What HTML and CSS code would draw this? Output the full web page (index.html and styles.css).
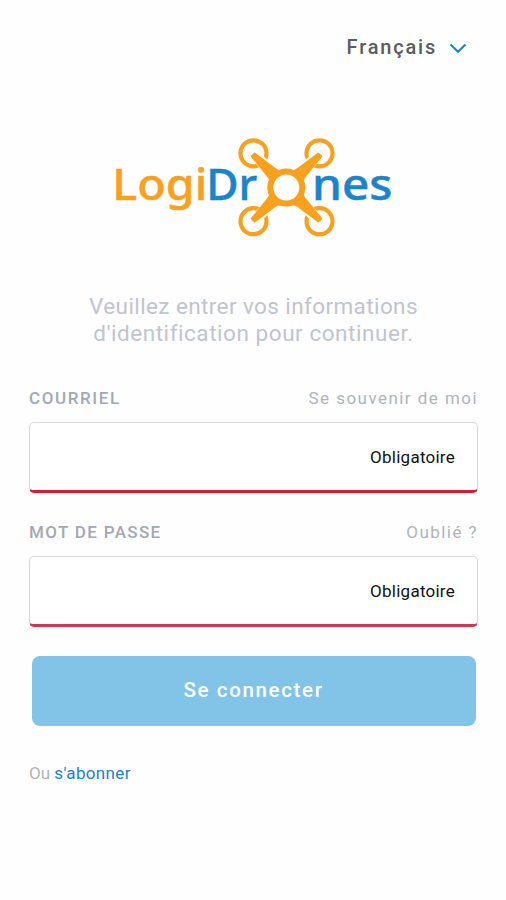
FILE: index.html
```html
<!DOCTYPE html>
<html lang="fr">
<head>
    <meta charset="UTF-8">
    <meta name="viewport" content="width=device-width, initial-scale=1.0">
    <title>LogiDrones</title>
    <link rel="stylesheet" href="styles.css">
</head>
<body>
    <header class="language">
        <span class="language-name">Français</span>
        <svg class="chevron" width="18" height="11" viewBox="0 0 18 11"><path d="M1.5 1.5L9 8.7L16.5 1.5"/></svg>
    </header>

    <svg class="logo" width="290" height="110" viewBox="110 130 290 110" role="img" aria-label="LogiDrones">
        <g class="rotors">
            <circle cx="253.5" cy="153.3" r="13"/>
            <circle cx="319.5" cy="153.3" r="13"/>
            <circle cx="253.5" cy="221.2" r="13"/>
            <circle cx="319.5" cy="221.2" r="13"/>
        </g>
        <path class="arm-gap" d="M257 157L286.5 187.5L316 157M257 218L286.5 187.5L316 218"/>
        <g class="arms">
            <path d="M251.8 156.3L254.6 153.6L274.5 168.5Q279 172 283 171L270 184Q271 179 267.5 175.5Z"/>
            <path d="M321.2 156.3L318.4 153.6L298.5 168.5Q294 172 290 171L303 184Q302 179 305.5 175.5Z"/>
            <path d="M251.8 218.7L254.6 221.4L274.5 206.5Q279 203 283 204L270 191Q271 196 267.5 199.5Z"/>
            <path d="M321.2 218.7L318.4 221.4L298.5 206.5Q294 203 290 204L303 191Q302 196 305.5 199.5Z"/>
        </g>
        <circle class="hub" cx="286.3" cy="187.5" r="16"/>
        <text class="orange" x="112.3" y="199.8" textLength="95" lengthAdjust="spacingAndGlyphs">Logi</text>
        <text class="blue" x="206.3" y="199.8" textLength="51" lengthAdjust="spacingAndGlyphs">Dr</text>
        <text class="blue" x="312" y="199.8" textLength="80.5" lengthAdjust="spacingAndGlyphs">nes</text>
    </svg>

    <p class="intro">Veuillez entrer vos informations<br><span class="intro-end">d'identification pour continuer.</span></p>

    <form class="login">
        <div class="labels">
            <label class="label" for="email">COURRIEL</label>
            <span class="hint">Se souvenir de moi</span>
        </div>
        <div class="field">
            <input id="email" type="email">
            <span class="required">Obligatoire</span>
        </div>
        <div class="labels">
            <label class="label password" for="password">MOT DE PASSE</label>
            <span class="hint">Oublié ?</span>
        </div>
        <div class="field second">
            <input id="password" type="password">
            <span class="required">Obligatoire</span>
        </div>
        <button class="submit" type="button">Se connecter</button>
    </form>

    <p class="signup">Ou <a href="#">s'abonner</a></p>
</body>
</html>
```
FILE: styles.css
```css
* {
    box-sizing: border-box;
}
body {
    margin: 0;
    padding: 0 28px 0 29px;
    height: 900px;
    background: #fefefe;
    font-family: Roboto, "Liberation Sans", sans-serif;
}
.language {
    display: flex;
    align-items: center;
    justify-content: flex-end;
    height: 60px;
    margin-top: 17px;
    padding-right: 11px;
    color: #5c5c5c;
}
.language-name {
    font-size: 20px;
    font-weight: 500;
    letter-spacing: 1.8px;
    margin-right: 12px;
}
.chevron {
    margin-top: 2px;
    fill: none;
    stroke: #1c84cf;
    stroke-width: 2.2;
}
.logo {
    display: block;
    margin: 53px 0 0 81px;
    font-family: "Noto Sans", "Open Sans", sans-serif;
    font-size: 44px;
    font-weight: 500;
}
.orange, .arms {
    fill: #f8a11e;
    stroke: #f8a11e;
    stroke-width: 0.5;
}
.arms {
    stroke-width: 2;
    stroke-linejoin: round;
}
.blue {
    fill: #1c84cb;
    stroke: #1c84cb;
    stroke-width: 0.5;
}
.rotors, .hub {
    fill: none;
    stroke: #f8a11e;
    stroke-width: 4.2;
}
.hub {
    fill: #fefefe;
    stroke-width: 6;
}
.arm-gap {
    fill: none;
    stroke: #fefefe;
    stroke-width: 11;
}
.intro {
    margin: 53px 0 0;
    color: #c1c4cf;
    font-size: 22.5px;
    line-height: 26.5px;
    text-align: center;
    letter-spacing: 0.4px;
    white-space: nowrap;
}
.intro-end {
    letter-spacing: 0.55px;
}
.labels {
    display: flex;
    justify-content: space-between;
    align-items: center;
    height: 20px;
    font-size: 17px;
}
.login {
    margin-top: 42px;
}
.label {
    color: #a3a8b5;
    font-weight: 500;
    letter-spacing: 1.6px;
}
.password {
    letter-spacing: 1.35px;
}
.hint {
    color: #b0b3bb;
    letter-spacing: 1.45px;
}
.field {
    display: flex;
    align-items: center;
    height: 71px;
    margin: 14px 0 29px;
    padding-right: 22px;
    border: 1px solid #d8d8d8;
    border-bottom: 3px solid #cb1f3b;
    border-radius: 5px;
    background: #fff;
}
.second {
    border-bottom-color: #cf3854;
}
.field input {
    flex: 1;
    min-width: 0;
    height: 60px;
    border: 0;
    outline: 0;
    background: none;
}
.required {
    color: #111;
    font-size: 17px;
    letter-spacing: 0.25px;
}
.submit {
    display: block;
    width: 444px;
    height: 70px;
    margin-left: 2.5px;
    padding-bottom: 4px;
    border: 0;
    border-radius: 8px;
    background: #82c3e8;
    color: #fff;
    font: 500 20.5px Roboto, sans-serif;
    letter-spacing: 1.65px;
}
.signup {
    margin: 37px 0 0;
    color: #b0b3bb;
    font-size: 17px;
    line-height: 20px;
}
.signup a {
    color: #1c80ca;
    letter-spacing: 0.35px;
    text-decoration: none;
}
```
